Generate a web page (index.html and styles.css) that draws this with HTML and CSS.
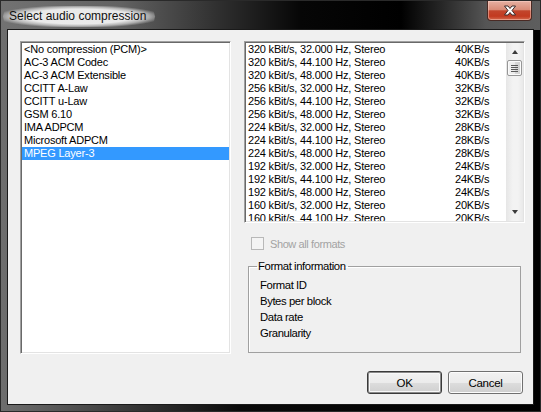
FILE: index.html
```html
<!DOCTYPE html>
<html>
<head>
<meta charset="utf-8">
<link rel="stylesheet" href="styles.css">
</head>
<body>
<div class="window">
  <div class="titlebar">
    <span class="title">Select audio compression</span>
    <div class="close">
      <svg width="14" height="11" viewBox="0 0 14 11"><path d="M1.5 1 H5 L7 3.5 L9 1 H12.5 L9 5.5 L12.5 10 H9 L7 7.5 L5 10 H1.5 L5 5.5 Z" fill="#fff" stroke="#3a2a2a" stroke-width="1" stroke-linejoin="round"/></svg>
    </div>
  </div>
  <div class="client">
    <div class="main">
      <div class="listbox codecs">
        <div class="item">&lt;No compression (PCM)&gt;</div>
        <div class="item">AC-3 ACM Codec</div>
        <div class="item">AC-3 ACM Extensible</div>
        <div class="item">CCITT A-Law</div>
        <div class="item">CCITT u-Law</div>
        <div class="item">GSM 6.10</div>
        <div class="item">IMA ADPCM</div>
        <div class="item">Microsoft ADPCM</div>
        <div class="item selected">MPEG Layer-3</div>
      </div>
      <div class="right">
        <div class="listbox formats">
          <div class="rows">
            <div class="row"><span class="fmt">320 kBit/s, 32.000 Hz, Stereo</span><span>40KB/s</span></div>
            <div class="row"><span class="fmt">320 kBit/s, 44.100 Hz, Stereo</span><span>40KB/s</span></div>
            <div class="row"><span class="fmt">320 kBit/s, 48.000 Hz, Stereo</span><span>40KB/s</span></div>
            <div class="row"><span class="fmt">256 kBit/s, 32.000 Hz, Stereo</span><span>32KB/s</span></div>
            <div class="row"><span class="fmt">256 kBit/s, 44.100 Hz, Stereo</span><span>32KB/s</span></div>
            <div class="row"><span class="fmt">256 kBit/s, 48.000 Hz, Stereo</span><span>32KB/s</span></div>
            <div class="row"><span class="fmt">224 kBit/s, 32.000 Hz, Stereo</span><span>28KB/s</span></div>
            <div class="row"><span class="fmt">224 kBit/s, 44.100 Hz, Stereo</span><span>28KB/s</span></div>
            <div class="row"><span class="fmt">224 kBit/s, 48.000 Hz, Stereo</span><span>28KB/s</span></div>
            <div class="row"><span class="fmt">192 kBit/s, 32.000 Hz, Stereo</span><span>24KB/s</span></div>
            <div class="row"><span class="fmt">192 kBit/s, 44.100 Hz, Stereo</span><span>24KB/s</span></div>
            <div class="row"><span class="fmt">192 kBit/s, 48.000 Hz, Stereo</span><span>24KB/s</span></div>
            <div class="row"><span class="fmt">160 kBit/s, 32.000 Hz, Stereo</span><span>20KB/s</span></div>
            <div class="row"><span class="fmt">160 kBit/s, 44.100 Hz, Stereo</span><span>20KB/s</span></div>
          </div>
          <div class="scrollbar">
            <div class="arrow up"></div>
            <div class="thumb"><span></span><span></span><span></span><span></span></div>
            <div class="track"></div>
            <div class="arrow down"></div>
          </div>
        </div>
        <label class="check"><span class="box"></span>Show all formats</label>
        <fieldset class="group">
          <legend>Format information</legend>
          <div class="info">Format ID</div>
          <div class="info">Bytes per block</div>
          <div class="info">Data rate</div>
          <div class="info">Granularity</div>
        </fieldset>
      </div>
    </div>
    <div class="buttons">
      <button class="btn default">OK</button>
      <button class="btn">Cancel</button>
    </div>
  </div>
</div>
</body>
</html>
```
FILE: styles.css
```css
html, body {
  margin: 0;
  padding: 0;
  background: #000;
}
body {
  font-family: "Liberation Sans", Arial, sans-serif;
  font-size: 11px;
  color: #000;
}
.window {
  width: 541px;
  height: 412px;
  box-sizing: border-box;
  display: flex;
  flex-direction: column;
  background: linear-gradient(to right, #6e6e6e 0px, #5e5e5e 40px, #333 140px, #0a0a0a 240px, #000 100%);
  border: 1px solid #2a2a2a;
}
.titlebar {
  height: 29px;
  display: flex;
  align-items: flex-start;
  background: linear-gradient(to right, #727272 0px, #626262 120px, #2e2e2e 220px, #060606 300px, #000 400px, #262626 440px, #555 485px, #5e5e5e 100%);
}
.title {
  font-size: 12px;
  color: #111;
  margin: 5px 0 0 2px;
  padding: 3px 9px 4px 6px;
  border-radius: 12px;
  background: radial-gradient(ellipse at center, rgba(238,238,238,0.97) 50%, rgba(220,220,220,0.65) 65%, rgba(200,200,200,0) 78%);
  line-height: 14px;
}
.close {
  margin-left: auto;
  margin-right: 8px;
  width: 45px;
  height: 20px;
  box-sizing: border-box;
  border: 1px solid #4a2a24;
  border-top: none;
  border-radius: 0 0 4px 4px;
  background: linear-gradient(to bottom, #e6b0a2 0%, #d98c78 45%, #c2452c 52%, #c23a20 80%, #d36a4e 100%);
  display: flex;
  align-items: center;
  justify-content: center;
  box-shadow: inset 0 0 0 1px rgba(255,220,210,0.45);
}
.close svg { display: block; margin-top: -1px; }
.client {
  margin: 0 7px 7px 7px;
  height: 374px;
  background: #f0f0f0;
  box-shadow: 0 0 0 1px #1a1a1a;
  display: flex;
  flex-direction: column;
}
.main {
  display: flex;
  gap: 13px;
  padding: 11px 8px 0 12px;
}
.listbox {
  background: #fff;
  box-sizing: border-box;
  border: 1px solid;
  border-color: #a0a0a0 #fff #fff #a0a0a0;
  box-shadow: inset 1px 1px 0 #696969, inset -1px -1px 0 #e3e3e3;
  padding: 1px;
  overflow: hidden;
  letter-spacing: -0.2px;
}
.codecs {
  width: 211px;
  height: 313px;
}
.item {
  height: 13px;
  line-height: 13px;
  padding-left: 2px;
  white-space: nowrap;
}
.item.selected {
  background: #3399ff;
  color: #fff;
}
.right {
  width: 281px;
  display: flex;
  flex-direction: column;
}
.formats {
  height: 182px;
  display: flex;
}
.rows {
  flex: 1;
  overflow: hidden;
}
.row {
  display: flex;
  height: 13px;
  line-height: 13px;
  padding-left: 2px;
  white-space: nowrap;
}
.fmt {
  width: 207px;
}
.scrollbar {
  width: 17px;
  display: flex;
  flex-direction: column;
  align-items: center;
  background: linear-gradient(to right, #e6e6e6, #f3f3f3 40%, #f3f3f3 70%, #e9e9e9);
}
.arrow {
  height: 17px;
  width: 17px;
  display: flex;
  align-items: center;
  justify-content: center;
}
.arrow::before {
  content: "";
  width: 0;
  height: 0;
  border-left: 3.5px solid transparent;
  border-right: 3.5px solid transparent;
}
.arrow.up::before {
  border-bottom: 4px solid #3c3c3c;
}
.arrow.down::before {
  border-top: 4px solid #3c3c3c;
  margin-top: -2px;
}
.thumb {
  width: 15px;
  height: 16px;
  box-sizing: border-box;
  border: 1px solid #979797;
  border-radius: 2px;
  background: linear-gradient(to right, #f2f2f2, #ebebeb 50%, #d8d8d8 51%, #d2d2d2);
  display: flex;
  flex-direction: column;
  align-items: center;
  justify-content: center;
  gap: 1px;
  box-shadow: inset 0 0 0 1px #fbfbfb;
}
.thumb span {
  width: 7px;
  height: 1px;
  background: #5a5a5a;
}
.track {
  flex: 1;
}
.check {
  display: flex;
  align-items: center;
  height: 13px;
  margin: 14px 0 0 7px;
  color: #a3a3a3;
  letter-spacing: -0.4px;
}
.box {
  width: 13px;
  height: 13px;
  box-sizing: border-box;
  border: 1px solid #b8b8b8;
  background: #f4f4f4;
  margin-right: 6px;
}
.group {
  margin: 10px 0 0 4px;
  width: 273px;
  height: 93px;
  box-sizing: border-box;
  border: 1px solid #a0a0a0;
  box-shadow: inset 1px 1px 0 #fff;
  padding: 4px 0 0 11px;
  letter-spacing: -0.4px;
  font-size: 11.3px;
}
.group legend {
  padding: 0 2px 0 1px;
  margin-left: -3px;
  line-height: 13px;
}
.info {
  height: 16px;
  line-height: 16px;
}
.buttons {
  display: flex;
  justify-content: flex-end;
  gap: 6px;
  padding-right: 10px;
  margin-top: 17px;
}
.btn {
  width: 75px;
  height: 23px;
  box-sizing: border-box;
  font-family: "Liberation Sans", Arial, sans-serif;
  font-size: 11.5px;
  letter-spacing: -0.3px;
  color: #000;
  border: 1px solid #707070;
  border-radius: 3px;
  background: linear-gradient(to bottom, #f2f2f2 0%, #ebebeb 50%, #dddddd 51%, #cfcfcf 100%);
  box-shadow: inset 0 0 0 1px #fcfcfc;
  padding: 0;
  margin: 0;
}
.btn.default {
  border: 1px solid #3a3a3a;
  box-shadow: inset 0 0 0 1px #8a8a8a, inset 0 0 0 2px #f8f8f8;
}
```
